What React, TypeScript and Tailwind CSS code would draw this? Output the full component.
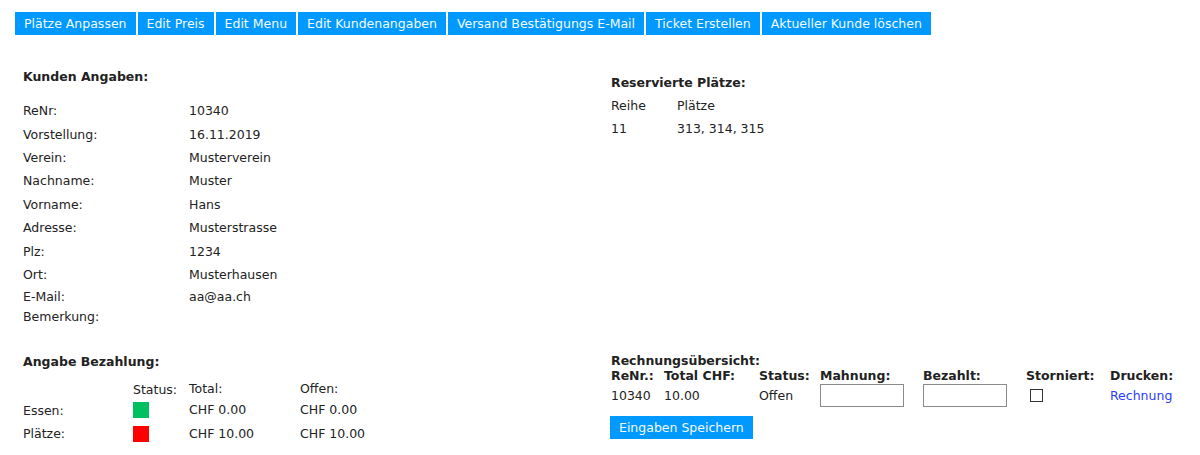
import * as React from "react"

const tabs = [
  "Plätze Anpassen",
  "Edit Preis",
  "Edit Menu",
  "Edit Kundenangaben",
  "Versand Bestätigungs E-Mail",
  "Ticket Erstellen",
  "Aktueller Kunde löschen",
]

const kunde: [string, string][] = [
  ["ReNr:", "10340"],
  ["Vorstellung:", "16.11.2019"],
  ["Verein:", "Musterverein"],
  ["Nachname:", "Muster"],
  ["Vorname:", "Hans"],
  ["Adresse:", "Musterstrasse"],
  ["Plz:", "1234"],
  ["Ort:", "Musterhausen"],
]

export default function App() {
  return (
    <div className="min-h-[455px] bg-white text-[12.5px] text-[#222] font-['DejaVu_Sans',Verdana,sans-serif]">
      {/* Aktionen */}
      <div className="flex gap-[2px] pl-[15px] pt-[12px]">
        {tabs.map((t) => (
          <button
            key={t}
            className="h-[23px] px-[9px] bg-[#0099ff] text-[#f4f9ff] leading-[23px] whitespace-nowrap"
          >
            {t}
          </button>
        ))}
      </div>

      <div className="grid grid-cols-[588px_1fr] pl-[23px]">
        {/* Kunden Angaben */}
        <div className="pt-[34px]">
          <h3 className="font-bold leading-[16px] mb-[15px]">Kunden Angaben:</h3>
          {kunde.map(([k, v]) => (
            <div key={k} className="flex h-[23.4px] items-center">
              <span className="w-[166px]">{k}</span>
              <span>{v}</span>
            </div>
          ))}
          <div className="flex h-[21px] items-center">
            <span className="w-[166px]">E-Mail:</span>
            <span>aa@aa.ch</span>
          </div>
          <div className="flex h-[18px] items-center">
            <span className="w-[166px]">Bemerkung:</span>
          </div>
        </div>

        {/* Reservierte Plätze */}
        <div className="pt-[40px]">
          <h3 className="font-bold leading-[16px] mb-[4px]">Reservierte Plätze:</h3>
          <div className="flex h-[23px] items-center">
            <span className="w-[66px]">Reihe</span>
            <span>Plätze</span>
          </div>
          <div className="flex h-[23px] items-center">
            <span className="w-[66px]">11</span>
            <span>313, 314, 315</span>
          </div>
        </div>

        {/* Angabe Bezahlung */}
        <div className="pt-[28px]">
          <h3 className="font-bold leading-[16px] mb-[10px]">Angabe Bezahlung:</h3>
          <div className="grid grid-cols-[110px_56px_111px_auto] items-center">
            <span />
            <span className="h-[16px] leading-[16px]">Status:</span>
            <span>Total:</span>
            <span>Offen:</span>

            <span className="h-[23px] leading-[23px]">Essen:</span>
            <span className="w-[16px] h-[16px] bg-[#00c060]" />
            <span>CHF 0.00</span>
            <span>CHF 0.00</span>

            <span className="h-[24px] leading-[24px]">Plätze:</span>
            <span className="w-[16px] h-[16px] bg-[#ff0000]" />
            <span>CHF 10.00</span>
            <span>CHF 10.00</span>
          </div>
        </div>

        {/* Rechnungsübersicht */}
        <div className="pt-[27px]">
          <h3 className="font-bold leading-[15px]">Rechnungsübersicht:</h3>
          <div className="grid grid-cols-[53px_95px_61px_103px_103px_84px_auto]">
            <span className="font-bold leading-[15px]">ReNr.:</span>
            <span className="font-bold leading-[15px]">Total CHF:</span>
            <span className="font-bold leading-[15px]">Status:</span>
            <span className="font-bold leading-[15px]">Mahnung:</span>
            <span className="font-bold leading-[15px]">Bezahlt:</span>
            <span className="font-bold leading-[15px]">Storniert:</span>
            <span className="font-bold leading-[15px]">Drucken:</span>

            <span className="h-[25px] leading-[25px]">10340</span>
            <span className="leading-[25px]">10.00</span>
            <span className="leading-[25px]">Offen</span>
            <input className="mt-[1px] w-[84px] h-[23px] border border-[#8a8a8a] bg-white" />
            <input className="mt-[1px] w-[84px] h-[23px] border border-[#8a8a8a] bg-white" />
            <span className="pl-[4px] pt-[6px]">
              <span className="block w-[13px] h-[13px] border border-[#333] bg-white" />
            </span>
            <a className="leading-[25px] text-[#2a3cff]">Rechnung</a>
          </div>
          <button className="mt-[8px] -ml-[1px] h-[23px] px-[9px] bg-[#0099ff] text-[#f4f9ff] leading-[23px]">
            Eingaben Speichern
          </button>
        </div>
      </div>
    </div>
  )
}
